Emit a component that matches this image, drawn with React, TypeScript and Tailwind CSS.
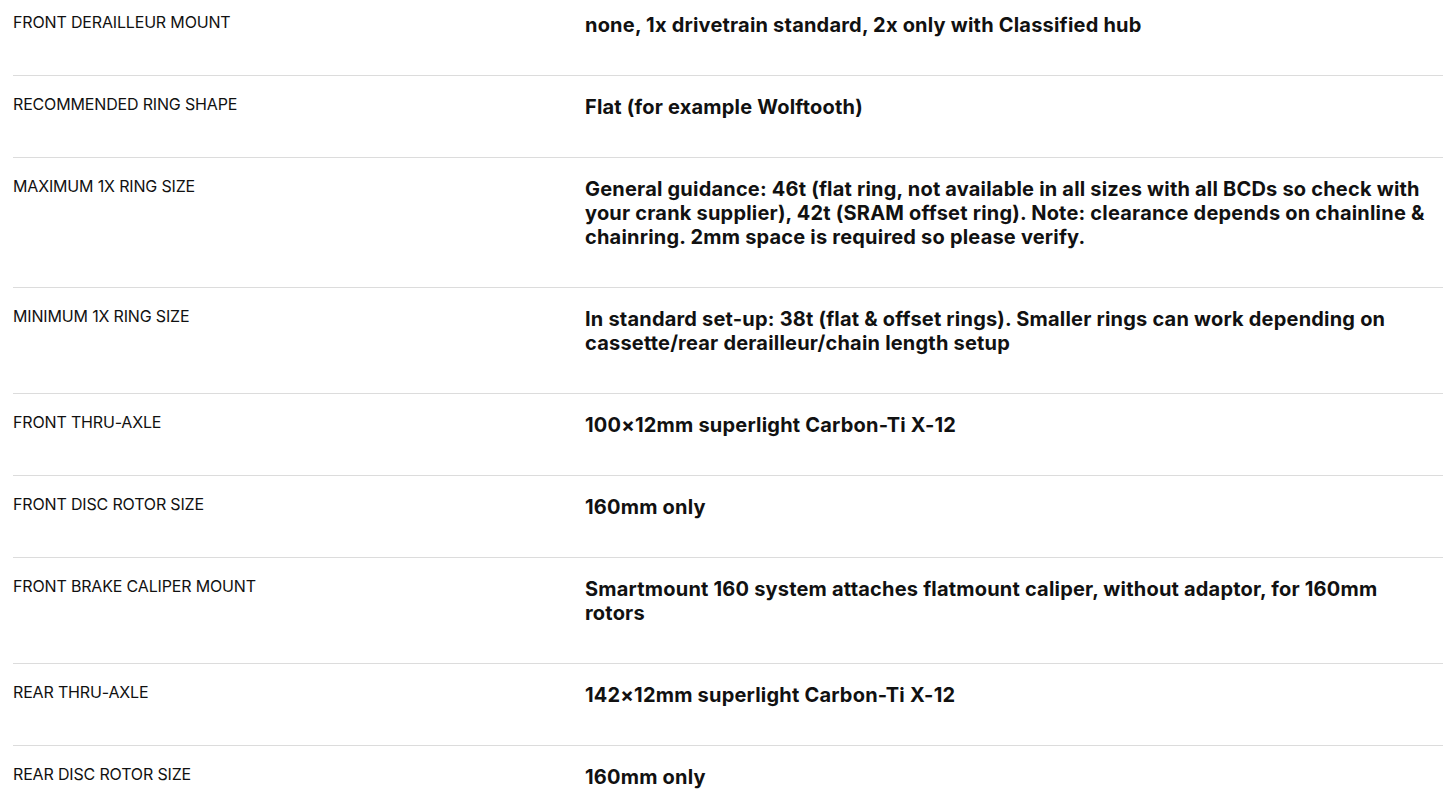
const specs = [
  {
    label: "Front derailleur mount",
    value: "none, 1x drivetrain standard, 2x only with Classified hub",
  },
  {
    label: "Recommended ring shape",
    value: "Flat (for example Wolftooth)",
  },
  {
    label: "Maximum 1x ring size",
    value:
      "General guidance: 46t (flat ring, not available in all sizes with all BCDs so check with your crank supplier), 42t (SRAM offset ring). Note: clearance depends on chainline & chainring. 2mm space is required so please verify.",
  },
  {
    label: "Minimum 1x ring size",
    value:
      "In standard set-up: 38t (flat & offset rings). Smaller rings can work depending on cassette/rear derailleur/chain length setup",
  },
  {
    label: "Front thru-axle",
    value: "100×12mm superlight Carbon-Ti X-12",
  },
  {
    label: "Front disc rotor size",
    value: "160mm only",
  },
  {
    label: "Front brake caliper mount",
    value:
      "Smartmount 160 system attaches flatmount caliper, without adaptor, for 160mm rotors",
  },
  {
    label: "Rear thru-axle",
    value: "142×12mm superlight Carbon-Ti X-12",
  },
  {
    label: "Rear disc rotor size",
    value: "160mm only",
  },
];

const SpecRow = ({ label, value }: { label: string; value: string }) => {
  return (
    <div className="flex items-start border-b border-[#dcdcdc] pt-[19px] pb-[38px]">
      <div className="w-[572px] shrink-0 text-[16px] leading-[18px] tracking-[-0.01em] uppercase text-[#111]">
        {label}
      </div>
      <div className="flex-1 pr-[12px] text-[20px] leading-[24px] font-bold tracking-[0.01em] text-[#111]">
        {value}
      </div>
    </div>
  );
};

export default function App() {
  return (
    <div
      className="min-h-[800px] overflow-hidden bg-white"
      style={{ fontFamily: "Inter, 'Liberation Sans', Arial, sans-serif" }}
    >
      <div className="ml-[13px] -mt-[6px] w-[1430px]">
        {specs.map((spec) => (
          <SpecRow key={spec.label} label={spec.label} value={spec.value} />
        ))}
      </div>
    </div>
  );
}
